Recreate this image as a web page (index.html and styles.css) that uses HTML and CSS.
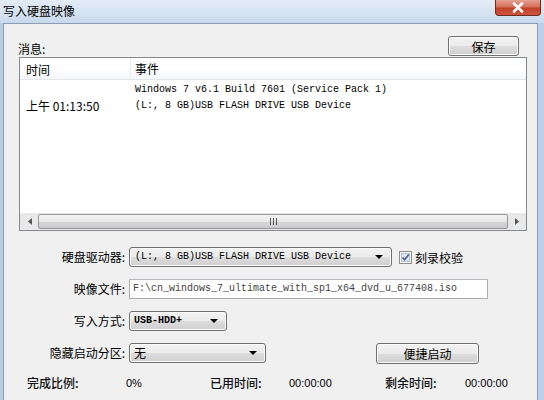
FILE: index.html
```html
<!DOCTYPE html>
<html lang="zh-CN">
<head>
  <meta charset="UTF-8" />
  <title>写入硬盘映像</title>
  <link rel="stylesheet" href="styles.css">
</head>
<body>
  <div class="janela">
    <div class="barra-titulo">
      <span class="titulo">写入硬盘映像</span>
      <div class="btn-fechar">
        <svg width="14" height="11" viewBox="0 0 14 11"><path d="M3 1.5 L11 9.5 M11 1.5 L3 9.5" stroke="#fff" stroke-width="2.6" stroke-linecap="round"/></svg>
      </div>
    </div>

    <div class="cliente">
      <div class="linha-topo">
        <span class="rotulo-msg">消息:</span>
        <button class="btn-win btn-salvar">保存</button>
      </div>

      <!-- lista de mensagens -->
      <div class="lista">
        <div class="lista-cabecalho">
          <span class="col-tempo">时间</span>
          <span class="col-evento">事件</span>
        </div>
        <div class="lista-item">
          <span class="col-tempo hora">上午 01:13:50</span>
          <span class="col-evento mono">Windows 7 v6.1 Build 7601 (Service Pack 1)<br>(L:, 8 GB)USB FLASH DRIVE USB Device</span>
        </div>
        <div class="lista-vazio"></div>
        <div class="rolagem">
          <span class="seta"><svg width="4" height="7" viewBox="0 0 4 7"><path d="M4 0 L0 3.5 L4 7 Z" fill="#555"/></svg></span>
          <div class="polegar">
            <svg width="7" height="7" viewBox="0 0 7 7"><path d="M0.5 0 V7 M3.5 0 V7 M6.5 0 V7" stroke="#555" stroke-width="1"/></svg>
          </div>
          <span class="seta"><svg width="4" height="7" viewBox="0 0 4 7"><path d="M0 0 L4 3.5 L0 7 Z" fill="#555"/></svg></span>
        </div>
      </div>

      <div class="formulario">
        <label class="rotulo">硬盘驱动器:</label>
        <div class="campo">
          <div class="combo combo-drive"><span class="mono">(L:, 8 GB)USB FLASH DRIVE USB Device</span><i class="triangulo"></i></div>
          <span class="caixa-check">
            <svg width="13" height="13" viewBox="0 0 13 13"><rect x="0.5" y="0.5" width="12" height="12" fill="#f4f4f4" stroke="#8e8f8f"/><rect x="2.5" y="2.5" width="8" height="8" fill="#dfe8f4" stroke="#b6c4d8"/><path d="M3.5 6.5 L5.6 8.8 L9.8 3.6" fill="none" stroke="#4a5f97" stroke-width="1.6"/></svg>
            刻录校验
          </span>
        </div>

        <label class="rotulo">映像文件:</label>
        <div class="campo">
          <div class="entrada mono">F:\cn_windows_7_ultimate_with_sp1_x64_dvd_u_677408.iso</div>
        </div>

        <label class="rotulo">写入方式:</label>
        <div class="campo">
          <div class="combo combo-modo"><span class="mono negrito">USB-HDD+</span><i class="triangulo"></i></div>
        </div>

        <label class="rotulo">隐藏启动分区:</label>
        <div class="campo">
          <div class="combo combo-oculto"><span>无</span><i class="triangulo"></i></div>
          <button class="btn-win btn-atalho">便捷启动</button>
        </div>
      </div>

      <div class="status">
        <span class="st-rotulo">完成比例:</span>
        <span class="st-valor">0%</span>
        <span class="st-rotulo">已用时间:</span>
        <span class="st-valor">00:00:00</span>
        <span class="st-rotulo">剩余时间:</span>
        <span class="st-valor">00:00:00</span>
      </div>
    </div>
  </div>
</body>
</html>
```

FILE: styles.css
```css
* {
  box-sizing: border-box;
}
body {
  margin: 0;
  font-family: 'Noto Sans CJK SC', 'Liberation Sans', sans-serif;
  font-size: 12px;
  color: #000;
  background: linear-gradient(90deg, #b9cde3 0%, #d3e1f0 30%, #c6d8ec 60%, #bcd1e8 100%);
}

.janela {
  width: 544px;
  height: 400px;
  overflow: hidden;
}

/* Barra de titulo */
.barra-titulo {
  height: 23px;
  display: flex;
  align-items: flex-start;
  background: linear-gradient(180deg, #e3ecf6 0%, #d4e2f1 60%, #c9d9eb 100%);
}
.titulo {
  margin: 3px 0 0 3px;
  line-height: 16px;
  font-size: 12px;
}
.btn-fechar {
  margin-left: auto;
  margin-right: 3px;
  width: 46px;
  height: 16px;
  border: 1px solid #6b2a22;
  border-top: none;
  border-radius: 0 0 4px 4px;
  background: linear-gradient(180deg, #e6a08f 0%, #d4705a 45%, #c0412a 55%, #d0553c 100%);
  display: flex;
  align-items: center;
  justify-content: center;
}

.cliente {
  margin-left: 3px;
  width: 535px;
  height: 377px;
  border: 1px solid #8a9db3;
  border-bottom: none;
  background-color: #f0f0f0;
}

.linha-topo {
  display: flex;
  align-items: center;
  height: 20px;
  margin-top: 12px;
  padding-right: 18px;
}
.rotulo-msg {
  margin-left: 14px;
  margin-top: 4px;
}

.btn-win {
  font-family: 'Noto Sans CJK SC', sans-serif;
  font-size: 12px;
  color: #000;
  height: 20px;
  padding: 0;
  border: 1px solid #707070;
  border-radius: 3px;
  background: linear-gradient(180deg, #f2f2f2 0%, #ebebeb 50%, #dddddd 51%, #cfcfcf 100%);
  box-shadow: inset 0 0 0 1px #fcfcfc;
  line-height: 17px;
}
.btn-salvar {
  margin-left: auto;
  width: 71px;
}

/* Lista */
.lista {
  margin: 1px 0 0 15px;
  width: 508px;
  height: 174px;
  border: 1px solid #828790;
  background-color: #fff;
  display: flex;
  flex-direction: column;
}
.lista-cabecalho {
  display: grid;
  grid-template-columns: 110px 1fr;
  height: 22px;
  align-items: center;
  border-bottom: 1px solid #e3e6ea;
  background: linear-gradient(180deg, #ffffff 0%, #ffffff 50%, #f4f6f8 100%);
}
.lista-cabecalho .col-evento {
  border-left: 1px solid #eceef0;
  height: 100%;
  line-height: 22px;
}
.col-tempo {
  padding-left: 6px;
}
.col-evento {
  padding-left: 4px;
}
.lista-item {
  display: grid;
  grid-template-columns: 110px 1fr;
  padding-top: 2px;
}
.lista-item .col-evento {
  line-height: 16px;
  padding-left: 5px;
}
.hora {
  align-self: end;
  line-height: 16px;
  font-size: 12px;
}
.mono {
  font-family: 'Liberation Mono', monospace;
  font-size: 10px;
}
.negrito {
  font-weight: bold;
}
.lista-vazio {
  flex: 1;
}
.rolagem {
  height: 17px;
  display: flex;
  align-items: center;
  background: #e8e8e8;
  padding: 0 1px;
}
.seta {
  width: 17px;
  display: flex;
  justify-content: center;
}
.polegar {
  flex: 1;
  height: 15px;
  border: 1px solid #979797;
  border-radius: 2px;
  background: linear-gradient(180deg, #f3f3f3 0%, #e8e8e8 50%, #d6d6d6 51%, #cbcbcb 100%);
  display: flex;
  align-items: center;
  justify-content: center;
}

/* Formulario */
.formulario {
  display: grid;
  grid-template-columns: 121px 1fr;
  column-gap: 4px;
  row-gap: 12px;
  margin-top: 16px;
}
.rotulo {
  text-align: right;
  line-height: 20px;
  height: 20px;
}
.campo {
  display: flex;
  align-items: center;
  height: 20px;
}
.combo {
  position: relative;
  height: 20px;
  border: 1px solid #707070;
  border-radius: 3px;
  background: linear-gradient(180deg, #f2f2f2 0%, #ebebeb 50%, #dddddd 51%, #cfcfcf 100%);
  box-shadow: inset 0 0 0 1px #fafafa;
  display: flex;
  align-items: center;
  padding-left: 5px;
}
.combo span {
  line-height: 18px;
}
.triangulo {
  position: absolute;
  right: 8px;
  top: 7px;
  width: 0;
  height: 0;
  border-left: 4px solid transparent;
  border-right: 4px solid transparent;
  border-top: 4px solid #000;
}
.combo-drive {
  width: 263px;
}
.combo-modo {
  width: 98px;
  padding-left: 4px;
}
.combo-oculto {
  width: 137px;
  padding-left: 4px;
}
.caixa-check {
  display: flex;
  align-items: center;
  gap: 3px;
  margin-left: 7px;
}
.entrada {
  width: 359px;
  height: 20px;
  border: 1px solid #abadb3;
  border-top-color: #b5b8bf;
  background-color: #fff;
  color: #444;
  line-height: 18px;
  padding-left: 3px;
}
.btn-atalho {
  margin-left: 110px;
  width: 103px;
  height: 21px;
}

/* Status */
.status {
  display: grid;
  grid-template-columns: 99px 84px 79px 96px 80px 1fr;
  margin-top: 13px;
  padding-left: 23px;
  line-height: 14px;
}
.st-rotulo {
  font-weight: 500;
  color: #111;
}
.st-valor {
  font-family: 'Liberation Sans', sans-serif;
  font-size: 11px;
}
```
